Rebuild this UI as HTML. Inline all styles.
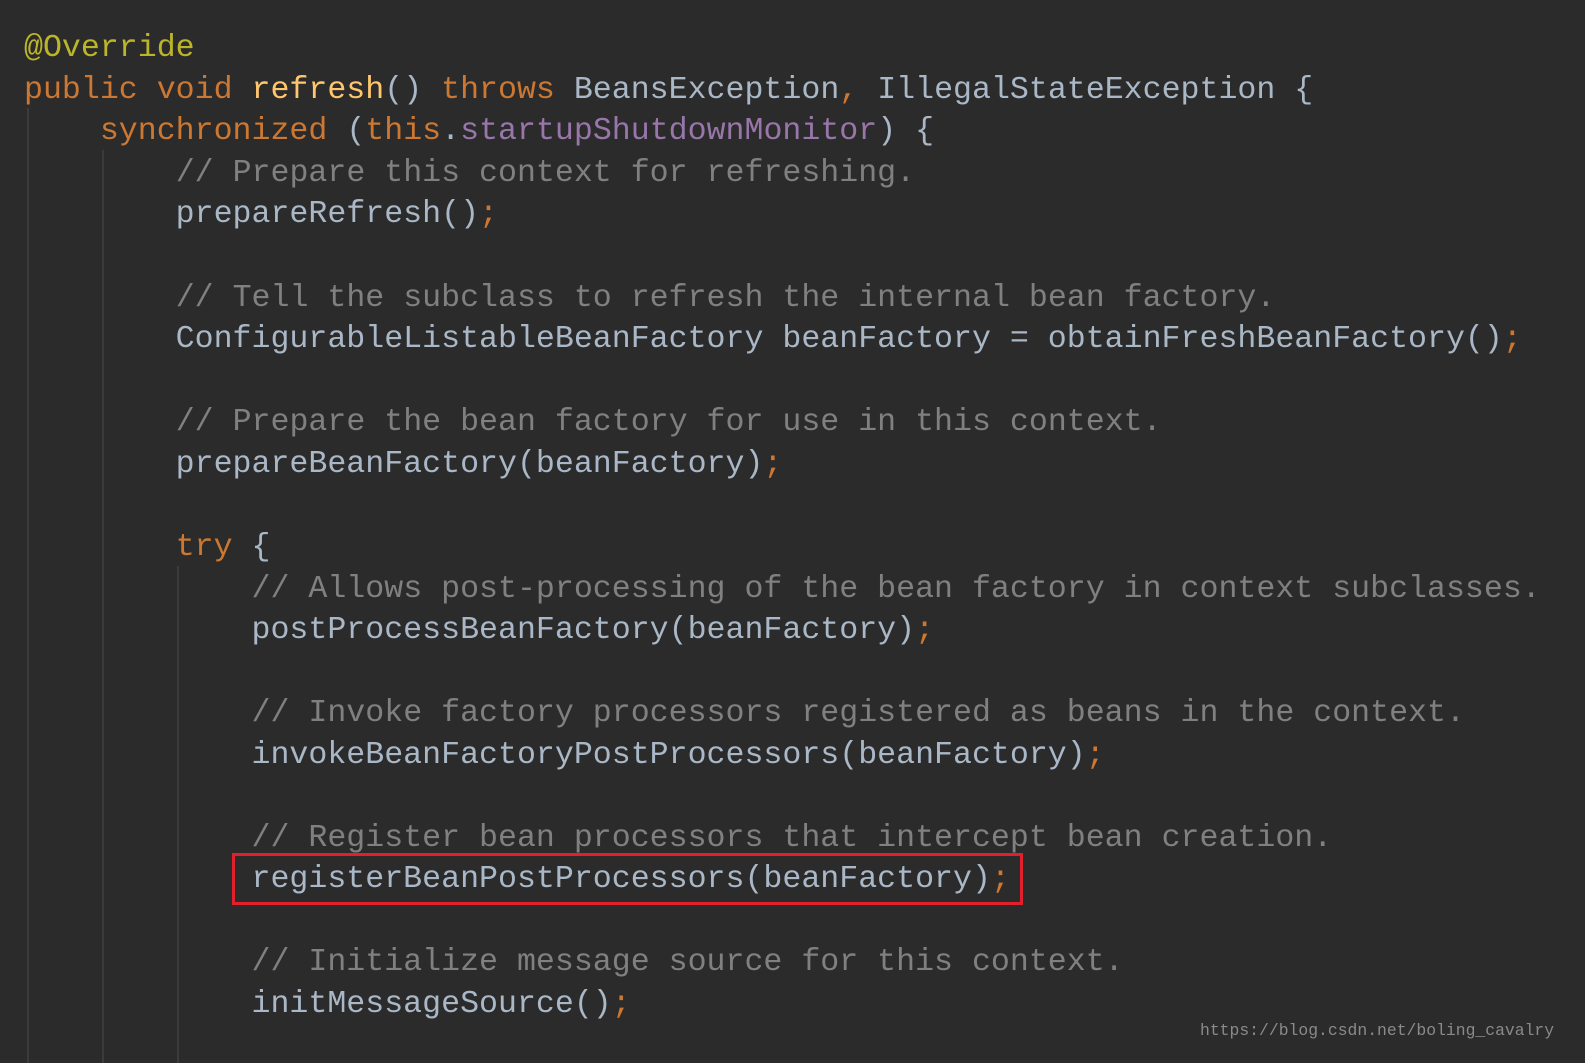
<!DOCTYPE html>
<html><head><meta charset="utf-8"><style>
html,body{margin:0;padding:0;background:#2b2b2b;width:1585px;height:1063px;overflow:hidden}
.l{position:absolute;left:24px;height:42px;margin:0;font-family:"Liberation Mono",monospace;font-size:31.6px;line-height:42px;color:#a9b7c6;white-space:pre;transform:translateY(3px)}
.k{color:#cc7832}.m{color:#ffc66d}.c{color:#808080}.f{color:#9876aa}.a{color:#bbb529}
.g{position:absolute;width:2px;background:#3b3b3b}
.box{position:absolute;left:232px;top:853px;width:785px;height:46px;border:3px solid #e0202a}
.wm{position:absolute;left:1200px;top:1021px;font-family:"Liberation Mono",monospace;font-size:16.4px;color:#8a8a8a}
</style></head><body>
<div class="g" style="left:27px;top:108px;height:955px"></div>
<div class="g" style="left:102px;top:150px;height:913px"></div>
<div class="g" style="left:177px;top:566px;height:497px"></div>
<div class="l" style="top:25px"><span class="a">@Override</span></div>
<div class="l" style="top:67px"><span class="k">public void </span><span class="m">refresh</span>() <span class="k">throws </span>BeansException<span class="k">, </span>IllegalStateException {</div>
<div class="l" style="top:108px">    <span class="k">synchronized </span>(<span class="k">this</span>.<span class="f">startupShutdownMonitor</span>) {</div>
<div class="l" style="top:150px">        <span class="c">// Prepare this context for refreshing.</span></div>
<div class="l" style="top:191px">        prepareRefresh()<span class="k">;</span></div>
<div class="l" style="top:275px">        <span class="c">// Tell the subclass to refresh the internal bean factory.</span></div>
<div class="l" style="top:316px">        ConfigurableListableBeanFactory beanFactory = obtainFreshBeanFactory()<span class="k">;</span></div>
<div class="l" style="top:399px">        <span class="c">// Prepare the bean factory for use in this context.</span></div>
<div class="l" style="top:441px">        prepareBeanFactory(beanFactory)<span class="k">;</span></div>
<div class="l" style="top:524px">        <span class="k">try </span>{</div>
<div class="l" style="top:566px">            <span class="c">// Allows post-processing of the bean factory in context subclasses.</span></div>
<div class="l" style="top:607px">            postProcessBeanFactory(beanFactory)<span class="k">;</span></div>
<div class="l" style="top:690px">            <span class="c">// Invoke factory processors registered as beans in the context.</span></div>
<div class="l" style="top:732px">            invokeBeanFactoryPostProcessors(beanFactory)<span class="k">;</span></div>
<div class="l" style="top:815px">            <span class="c">// Register bean processors that intercept bean creation.</span></div>
<div class="l" style="top:856px">            registerBeanPostProcessors(beanFactory)<span class="k">;</span></div>
<div class="l" style="top:939px">            <span class="c">// Initialize message source for this context.</span></div>
<div class="l" style="top:981px">            initMessageSource()<span class="k">;</span></div>
<div class="box"></div>
<div class="wm">https://blog.csdn.net/boling_cavalry</div>
</body></html>
